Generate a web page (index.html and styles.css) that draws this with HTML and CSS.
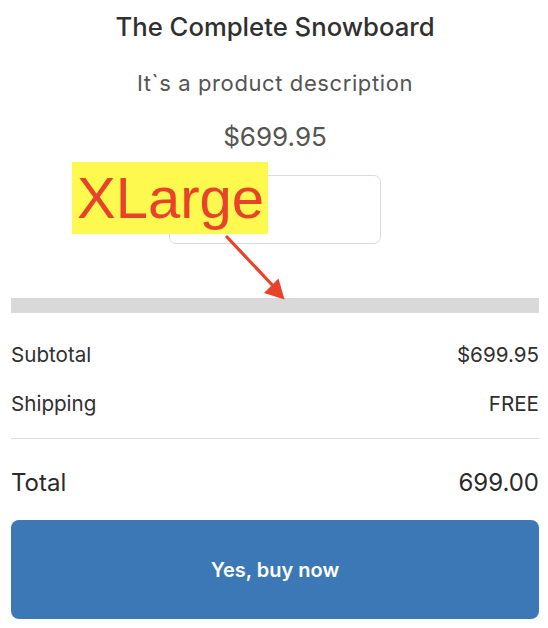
FILE: index.html
```html
<!DOCTYPE html>
<html lang="en">
<head>
<meta charset="utf-8">
<title>Checkout</title>
<link rel="stylesheet" href="styles.css">
</head>
<body>
<main class="page">
  <section class="product">
    <h1 class="title">The Complete Snowboard</h1>
    <p class="desc">It`s a product description</p>
    <p class="price">$699.95</p>
    <div class="variant-box"></div>
  </section>
  <div class="bar"></div>
  <section class="summary">
    <div class="row row-sub"><span>Subtotal</span><span>$699.95</span></div>
    <div class="row row-ship"><span>Shipping</span><span>FREE</span></div>
    <hr class="divider">
    <div class="row row-total"><span>Total</span><span>699.00</span></div>
  </section>
  <button class="buy">Yes, buy now</button>

  <div class="label">XLarge</div>
  <svg class="arrow" width="548" height="628" viewBox="0 0 548 628" aria-hidden="true">
    <line x1="227" y1="237" x2="276" y2="289" stroke="#e8432a" stroke-width="3.2" stroke-linecap="round"/>
    <polygon points="284.5,299.5 264,293 278.5,278.5" fill="#e8432a"/>
  </svg>
</main>
</body>
</html>
```

FILE: styles.css
```css
* { box-sizing: border-box; }
html, body { margin: 0; padding: 0; background: #fff; }
body {
  font-family: Inter, "Noto Sans", "Liberation Sans", sans-serif;
  color: #303030;
}
.page {
  position: relative;
  width: 548px;
  height: 628px;
  padding: 12px 9px 0 11px;
  display: flex;
  flex-direction: column;
}
.product {
  display: flex;
  flex-direction: column;
  align-items: center;
}
.title {
  margin: 0;
  font-size: 25.7px;
  line-height: 30px;
  font-weight: 500;
  color: #303030;
}
.desc {
  margin: 26px 0 0;
  font-size: 22px;
  letter-spacing: 0.6px;
  line-height: 30px;
  color: #555;
}
.price {
  margin: 24px 0 0;
  font-size: 26px;
  line-height: 30px;
  color: #555;
}
.variant-box {
  margin-top: 23px;
  width: 212px;
  height: 69px;
  border: 1px solid #dcdcdc;
  border-radius: 7px;
}
.bar {
  margin-top: 54px;
  height: 15px;
  background: #d9d9d9;
}
.summary {
  display: flex;
  flex-direction: column;
}
.row {
  display: flex;
  justify-content: space-between;
  font-size: 20.6px;
  line-height: 24px;
}
.row-sub { margin-top: 30px; }
.row-ship { margin-top: 25px; }
.divider {
  margin: 22px 0 0;
  border: 0;
  height: 1px;
  background: #dcdcdc;
}
.row-total {
  margin-top: 30px;
  font-size: 24px;
  line-height: 28px;
  font-weight: 400;
  color: #2a2a2a;
}
.buy {
  margin-top: 23px;
  height: 99px;
  width: 100%;
  border: 0;
  border-radius: 8px;
  background: #3b78b5;
  color: #fff;
  font-family: Inter, "Noto Sans", "Liberation Sans", sans-serif;
  font-size: 20px;
  font-weight: 600;
}
.label {
  position: absolute;
  left: 72px;
  top: 162px;
  width: 196px;
  height: 72px;
  background: #fdf94f;
  color: #e8432a;
  font-family: "Liberation Sans", Arial, sans-serif;
  font-size: 58px;
  line-height: 72px;
  padding-left: 5px;
  white-space: nowrap;
}
.arrow {
  position: absolute;
  left: 0;
  top: 0;
  pointer-events: none;
}
```
